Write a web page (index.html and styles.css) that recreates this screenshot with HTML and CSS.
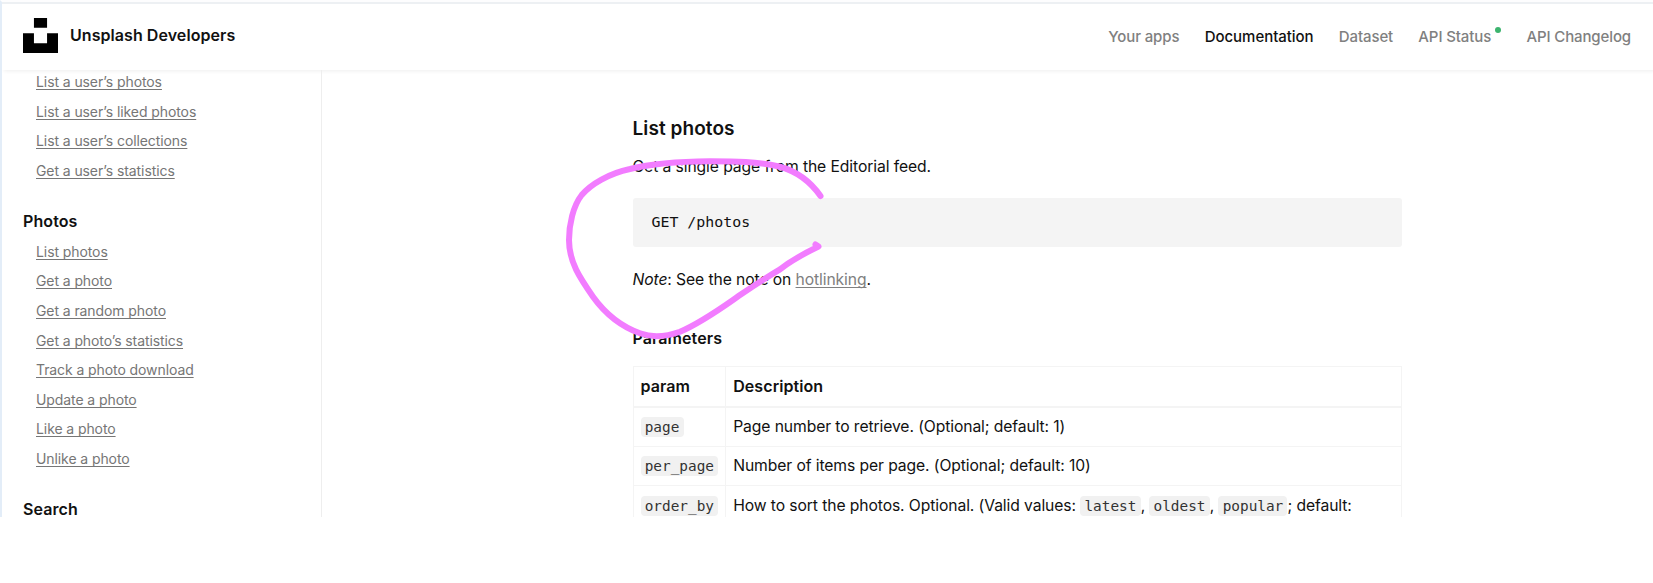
FILE: index.html
```html
<!DOCTYPE html>
<html lang="en">
<head>
<meta charset="utf-8">
<title>Unsplash Developers</title>
<link rel="stylesheet" href="styles.css">
</head>
<body>
<div class="window">
  <header class="header">
    <a class="brand">
      <svg class="logo" viewBox="0 0 32 32"><path d="M10 9V0h12v9H10zm12 5h10v18H0V14h10v9h12v-9z"/></svg>
      <span class="brand-name">Unsplash Developers</span>
    </a>
    <nav class="nav">
      <a>Your apps</a>
      <a class="active">Documentation</a>
      <a>Dataset</a>
      <a class="status">API Status<i class="dot"></i></a>
      <a>API Changelog</a>
    </nav>
  </header>
  <div class="body">
    <aside class="sidebar">
      <ul class="links">
        <li><a>List a user’s photos</a></li>
        <li><a>List a user’s liked photos</a></li>
        <li><a>List a user’s collections</a></li>
        <li><a>Get a user’s statistics</a></li>
      </ul>
      <h4 class="group">Photos</h4>
      <ul class="links">
        <li><a>List photos</a></li>
        <li><a>Get a photo</a></li>
        <li><a>Get a random photo</a></li>
        <li><a>Get a photo’s statistics</a></li>
        <li><a>Track a photo download</a></li>
        <li><a>Update a photo</a></li>
        <li><a>Like a photo</a></li>
        <li><a>Unlike a photo</a></li>
      </ul>
      <h4 class="group">Search</h4>
    </aside>
    <main class="main">
      <h3 class="title">List photos</h3>
      <p class="text">Get a single page from the Editorial feed.</p>
      <pre class="endpoint">GET /photos</pre>
      <p class="text note"><em>Note</em>: See the note on <a>hotlinking</a>.</p>
      <h4 class="subtitle">Parameters</h4>
      <table class="params">
        <thead><tr><th>param</th><th>Description</th></tr></thead>
        <tbody>
          <tr><td><code>page</code></td><td>Page number to retrieve. (Optional; default: 1)</td></tr>
          <tr><td><code>per_page</code></td><td>Number of items per page. (Optional; default: 10)</td></tr>
          <tr><td><code>order_by</code></td><td>How to sort the photos. Optional. (Valid values: <code>latest</code>, <code>oldest</code>, <code>popular</code>; default:</td></tr>
        </tbody>
      </table>
    </main>
  </div>
  <svg class="marker" viewBox="560 150 270 200"><path d="M820.5 196C810 181 796 171 779 166.500C757 161.500 735 161.300 710 161.300C683 161.500 650 164 630 169C609 173.500 591 184 581.700 195C573 206 569 225 569 240C569 262 580 278 593 296.700C604 312 620 326 640 333.300C653 338 668 336 680 331.700C703 322 724 306 743 293C755 285 767 277 780 269.300C792 260 803 254 818.500 246.500L815.500 244.500"/></svg>
</div>
</body>
</html>
```
FILE: styles.css
```css
* { box-sizing: border-box; }
body { margin: 0; background: #fff; color: #111; font-family: Inter, "Liberation Sans", sans-serif; font-size: 16px; }
h3, h4, p, ul, pre { margin: 0; padding: 0; }
.window { position: relative; height: 517px; overflow: hidden; display: flex; flex-direction: column; border-top: 2px solid #fdfdfe; border-left: 2px solid #e3edf8; }
.header { height: 68px; flex: none; display: flex; align-items: center; justify-content: space-between; padding: 0 22px 4px 21px; border-top: 2px solid #edf0f3; box-shadow: 2px 1px 4px rgba(0,0,0,.07); }
.brand { display: flex; align-items: center; gap: 12px; }
.logo { width: 35px; height: 35px; fill: #000; }
.brand-name { font-weight: 600; font-size: 16px; letter-spacing: .06px; }
.nav { display: flex; gap: 25.3px; padding-top: 2px; font-size: 15px; font-weight: 500; color: #808080; letter-spacing: -.12px; }
.nav .active { color: #111; letter-spacing: -.04px; }
.status { position: relative; padding-right: 10px; }
.dot { position: absolute; right: 0; top: 0; width: 6px; height: 6px; border-radius: 50%; background: #3cb46e; }
.body { flex: 1; min-height: 0; display: flex; overflow: hidden; }
.sidebar { width: 320px; flex: none; border-right: 1px solid #eee; padding-left: 21px; }
.links { list-style: none; padding-left: 13px; font-size: 14px; color: #767676; line-height: 29.6px; letter-spacing: -.09px; }
.links:first-child { margin-top: -3px; }
.links a, .note a { text-decoration: underline; text-underline-offset: 2px; text-decoration-skip-ink: none; }
.group { font-size: 16px; font-weight: 600; line-height: 24px; padding: 23.5px 0 4px; letter-spacing: .1px; }
.main { width: 769px; margin-left: 310.5px; }
.title { font-size: 19px; font-weight: 600; line-height: 28px; padding-top: 45px; letter-spacing: .08px; }
.text { font-size: 15.7px; line-height: 26px; letter-spacing: -.1px; }
.title + .text { padding-top: 11px; }
.endpoint { margin-top: 18px; height: 49px; padding-left: 19px; background: #f4f4f4; border-radius: 3px; font: 14.9px/48px "DejaVu Sans Mono", monospace; }
.note { margin-top: 20px; }
.note a { color: #808080; }
.subtitle { font-size: 16px; font-weight: 600; line-height: 26px; margin-top: 32px; letter-spacing: .08px; }
.params { width: 769px; margin-top: 15px; border-collapse: collapse; font-size: 15.7px; line-height: 24px; letter-spacing: -.1px; }
.params th, .params td { border: 1px solid #f4f4f4; padding: 7px 7px 6px; height: 39.6px; text-align: left; white-space: nowrap; }
.params th { font-size: 16px; font-weight: 600; letter-spacing: .08px; height: 40px; padding: 6px 7px 7px; border-bottom-width: 2px; }
.params th:first-child { width: 92px; }
code { font: 14.4px/20px "DejaVu Sans Mono", monospace; letter-spacing: 0; background: #f1f1f1; border-radius: 4px; padding: 2px 4.2px; color: #333; }
.marker { position: absolute; left: 558px; top: 148px; width: 270px; height: 200px; fill: none; stroke: #f27cff; stroke-width: 6; stroke-linecap: round; stroke-linejoin: round; }
```
